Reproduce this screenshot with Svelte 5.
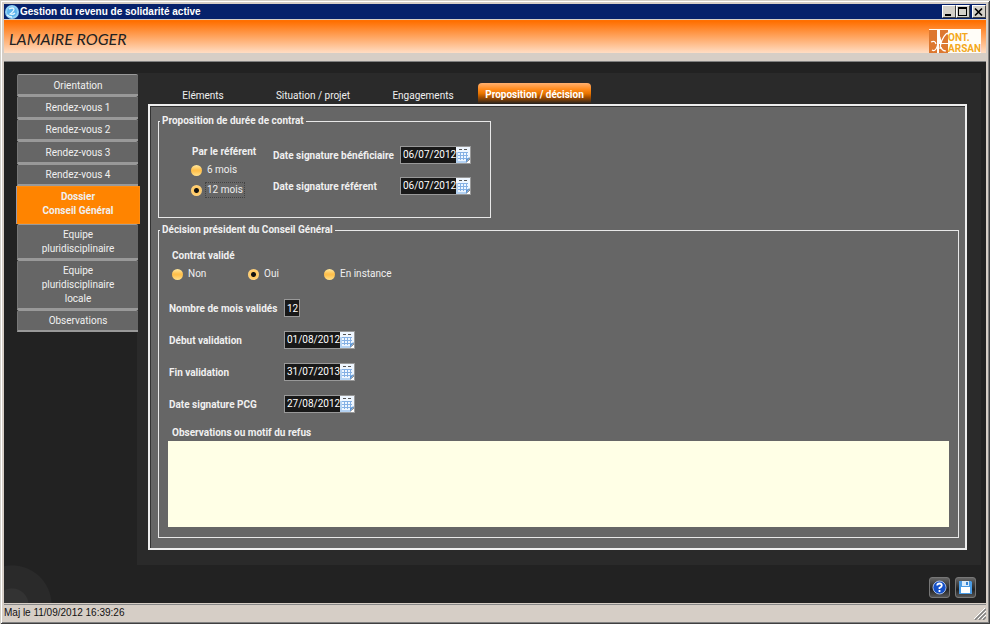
<script>
  let patient = 'LAMAIRE ROGER';
  let lastUpdate = 'Maj le 11/09/2012 16:39:26';

  const meetings = ['Orientation', 'Rendez-vous 1', 'Rendez-vous 2', 'Rendez-vous 3', 'Rendez-vous 4'];
  const sections = [
    { lines: ['Dossier', 'Conseil Général'] },
    { lines: ['Equipe', 'pluridisciplinaire'] },
    { lines: ['Equipe', 'pluridisciplinaire', 'locale'] },
    { lines: ['Observations'] }
  ];
  const tabs = ['Eléments', 'Situation / projet', 'Engagements', 'Proposition / décision'];

  let activeSection = 'Dossier';
  let activeTab = 'Proposition / décision';

  let duration = '12';
  let decision = 'Oui';
  let months = '12';
  let notes = '';

  let signatures = [
    { id: 'sig-benef', label: 'Date signature bénéficiaire', value: '06/07/2012' },
    { id: 'sig-ref', label: 'Date signature référent', value: '06/07/2012' }
  ];
  let validation = [
    { id: 'val-start', label: 'Début validation', value: '01/08/2012' },
    { id: 'val-end', label: 'Fin validation', value: '31/07/2013' },
    { id: 'sig-pcg', label: 'Date signature PCG', value: '27/08/2012' }
  ];
</script>

<div class="window">
  <div class="titlebar">
    <svg class="app-icon" viewBox="0 0 14 14" aria-hidden="true">
      <circle cx="7" cy="7" r="7" fill="#8fd0f5" />
      <circle cx="7" cy="7" r="5" fill="#5db4ec" />
      <path d="M4 4q4-2 5 0q0 2-4 5q3 1 5-1M2 10q3 2 5 2" stroke="#e4f6ff" stroke-width="1.3" fill="none" />
    </svg>
    <h1>Gestion du revenu de solidarité active</h1>
    <button class="win-btn" aria-label="Réduire">
      <svg viewBox="0 0 12 10"><path d="M2 7h6v2H2z" /></svg>
    </button>
    <button class="win-btn" aria-label="Agrandir">
      <svg viewBox="0 0 12 10"><path d="M1 0h9v9H1zM2 2v6h7V2z" fill-rule="evenodd" /></svg>
    </button>
    <button class="win-btn close" aria-label="Fermer">
      <svg viewBox="0 0 12 10"><path d="M2 1.500L9 8.500M9 1.500L2 8.500" stroke="#000" stroke-width="1.700" /></svg>
    </button>
  </div>

  <header>
    <h2>{patient}</h2>
    <svg class="logo" viewBox="0 0 52 24" role="img" aria-label="Mont Marsan">
      <rect width="52" height="24" fill="#fffdf8" />
      <path d="M0 1h8v23H0zM11 1h8v13h-8zM10 15h9v9h-9z" fill="#dd7830" />
      <path d="M3 21q3 2 5-3t1-12q4 3 2 14q1-10 6-15q3-2 2 1M2 13q4-2 5 2M12 18q1 4 5 4" stroke="#fff" stroke-width="1.200" fill="none" />
      <text x="19" y="12">ONT.</text>
      <text x="19" y="23">ARSAN</text>
    </svg>
  </header>

  <main>
    <nav>
      <div class="meetings">
        {#each meetings as item}
          <button class="nav-item">{item}</button>
        {/each}
      </div>
      {#each sections as section}
        <button class="nav-item" class:active={section.lines[0] === activeSection}>
          {#each section.lines as line}
            <span>{line}</span>
          {/each}
        </button>
      {/each}
    </nav>

    <div class="content">
      <div class="tabs" role="tablist">
        {#each tabs as tab}
          <button
            class="tab"
            role="tab"
            class:active={tab === activeTab}
            aria-selected={tab === activeTab}
            on:click={() => (activeTab = tab)}>{tab}</button>
        {/each}
      </div>

      <div class="panel">
        <fieldset class="proposal">
          <legend>Proposition de durée de contrat</legend>
          <div class="duration" role="radiogroup" aria-labelledby="duration-title">
            <strong id="duration-title">Par le référent</strong>
            <label><input type="radio" bind:group={duration} value="6" /><span>6 mois</span></label>
            <label class="focused"><input type="radio" bind:group={duration} value="12" /><span>12 mois</span></label>
          </div>
          <div class="signatures">
            {#each signatures as field}
              <label for={field.id}>{field.label}</label>
              {@render dateField(field)}
            {/each}
          </div>
        </fieldset>

        <fieldset class="decision">
          <legend>Décision président du Conseil Général</legend>
          <strong class="sub" id="decision-title">Contrat validé</strong>
          <div class="choices" role="radiogroup" aria-labelledby="decision-title">
            {#each ['Non', 'Oui', 'En instance'] as choice}
              <label><input type="radio" bind:group={decision} value={choice} /><span>{choice}</span></label>
            {/each}
          </div>
          <div class="rows">
            <label for="months">Nombre de mois validés</label>
            <input id="months" class="months" type="text" bind:value={months} />
            {#each validation as field}
              <label for={field.id}>{field.label}</label>
              {@render dateField(field)}
            {/each}
          </div>
          <label class="sub" for="notes">Observations ou motif du refus</label>
          <textarea id="notes" bind:value={notes}></textarea>
        </fieldset>
      </div>
    </div>

    <div class="actions">
      <button aria-label="Aide">
        <svg viewBox="0 0 15 15">
          <circle cx="7.500" cy="7.500" r="6.500" fill="#1450c8" stroke="#a4b8e0" />
          <path d="M5.200 5.500Q5.200 3.500 7.500 3.500T9.800 5.500Q9.800 6.800 7.500 7.800V9M7.500 10v2" stroke="#fff" stroke-width="1.800" fill="none" />
        </svg>
      </button>
      <button aria-label="Enregistrer">
        <svg viewBox="0 0 15 15">
          <path d="M1 1h12l1 1v12H1z" fill="#4a9be4" />
          <path d="M4 1h7v5H4z" fill="#d9ebfa" />
          <path d="M8 2h2v3H8z" fill="#3584d4" />
          <path d="M3 7h9v6H3z" fill="#fff" />
        </svg>
      </button>
    </div>
  </main>

  <footer>
    <span>{lastUpdate}</span>
    <svg class="grip" viewBox="0 0 12 12" aria-hidden="true">
      <path d="M1 12L12 1M5 12l7-7M9 12l3-3" stroke="#808080" stroke-width="1.500" />
      <path d="M0 11L11 0M4 11l8-8M8 11l4-4" stroke="#fff" stroke-width="1" />
    </svg>
  </footer>
</div>

{#snippet dateField(field)}
  <div class="date">
    <input id={field.id} type="text" bind:value={field.value} />
    <button aria-label="Calendrier">
      <svg viewBox="0 0 14 16">
        <path d="M0 0h14v11l-4 5H0z" fill="#eef6ff" />
        <path d="M0 5h2v11H0zM0 14h10v2H0z" fill="#b4d2f2" />
        <path d="M3 2.500h3M8 2.500h3" stroke="#555" stroke-width="1" />
        <path d="M2 5.500h10M2 8.500h10M2 11.500h9M4.500 5v8M7.500 5v8M10.500 5v7" stroke="#84b0e4" stroke-width="1" />
        <path d="M14 10l-4 6v-4z" fill="#5a94d4" />
        <path d="M14 12v4h-4z" fill="#fff" />
      </svg>
    </button>
  </div>
{/snippet}

<style>
  :global(body) {
    background: #d4ccc4;
  }

  * {
    box-sizing: border-box;
  }

  .window {
    min-height: 100vh;
    display: flex;
    flex-direction: column;
    padding: 4px;
    background: #d6cec6;
    box-shadow: inset 1px 1px #d4d0c8, inset -1px -1px #404040, inset 2px 2px #fff, inset -2px -2px #808080;
    color: #f0f0f0;
    font: 10px/14px Roboto, "Open Sans", sans-serif;
  }

  button,
  input,
  textarea {
    margin: 0;
    padding: 0;
    border: 0;
    font: inherit;
    color: inherit;
  }

  svg {
    display: block;
  }

  .titlebar {
    display: flex;
    align-items: center;
    height: 15px;
    padding-left: 1px;
    background: #06216b;
  }

  .app-icon {
    width: 14px;
    height: 14px;
  }

  h1 {
    flex: 1;
    margin: 0 0 0 1px;
    color: #fff;
    font: bold 10px/14px "Liberation Sans", Arial, sans-serif;
  }

  .win-btn {
    width: 14px;
    height: 13px;
    background: #d4d0c8;
    border: 1px solid #fff;
    border-right-color: #404040;
    border-bottom-color: #404040;
  }

  .win-btn svg {
    width: 12px;
    height: 10px;
  }

  .close {
    margin-left: 2px;
  }

  header {
    display: flex;
    align-items: center;
    justify-content: space-between;
    height: 33px;
    margin-top: 1px;
    padding: 0 5px;
    background: linear-gradient(#ff7002 5%, #ffddc4);
  }

  h2 {
    margin: 5px 0 0;
    color: #222;
    font: italic 16px/24px Lato, sans-serif;
  }

  .logo {
    align-self: flex-end;
    width: 52px;
    height: 24px;
  }

  .logo text {
    font: bold 10px Roboto, sans-serif;
    fill: #f4a81c;
  }

  main {
    flex: 1;
    display: grid;
    grid-template-columns: 133px 1fr;
    grid-template-rows: 1fr 38px;
    margin-top: 8px;
    padding: 11px 5px 0 0;
    border-top: 1px solid #808080;
    background: radial-gradient(circle at 8px calc(100% + 2px), #333 16px, transparent 17px),
      radial-gradient(circle at 8px calc(100% + 2px), #2a2a2a 39px, transparent 40px), #222;
  }

  nav {
    display: flex;
    flex-direction: column;
    padding: 1px 0 0 13px;
    margin-right: -1px;
    z-index: 1;
  }

  .meetings {
    display: grid;
    grid-auto-rows: 1fr;
    height: 112px;
  }

  .nav-item {
    padding: 3px 0 2px;
    border-top: 1px solid #999;
    border-bottom: 2px solid #999;
    border-left: 1px solid #777;
    border-radius: 2px 2px 0 0;
    background: #666;
    text-align: center;
  }

  .meetings .nav-item {
    padding: 2px 0 0;
  }

  .nav-item span {
    display: block;
  }

  .nav-item.active {
    margin: 0 -2px 0 -1px;
    padding: 3px 0 5px;
    border: 1px solid #ff8c10;
    border-left-color: #99a;
    border-radius: 0;
    background: #ff8400;
    font-weight: bold;
  }

  .content {
    display: flex;
    flex-direction: column;
    padding: 10px 14px 15px 11px;
    background: #2a2a2a;
  }

  .tabs {
    display: flex;
    height: 21px;
  }

  .tab {
    width: 110px;
    padding-top: 5px;
    background: none;
  }

  .tab.active {
    width: 113px;
    padding: 2px 0 0;
    border-radius: 4px 4px 0 0;
    background: linear-gradient(#ffb070, #ff8a1c 30%, #e87400 50%, #a04c00 70%, #222);
    color: #fff;
    font-weight: bold;
  }

  .panel {
    flex: 1;
    display: flex;
    flex-direction: column;
    gap: 5px;
    padding: 8px 6px 10px 8px;
    border: 2px solid #eee;
    background: #666;
    box-shadow: inset 1px 1px #333;
  }

  fieldset {
    min-width: 0;
    margin: 0;
    padding: 0;
    border: 1px solid #e8e8e8;
    box-shadow: none;
  }

  legend {
    margin-left: 1px;
    padding: 0 2px;
    font-weight: bold;
  }

  label,
  strong {
    white-space: nowrap;
  }

  input[type='radio'] {
    appearance: none;
    width: 11px;
    height: 11px;
    border-radius: 50%;
    background: linear-gradient(#ffe9a0, #ffc04c 45%, #ffc04c 55%, #ffe08c);
  }

  input[type='radio']:checked {
    background: radial-gradient(circle, #111 2px, #ffc860 3px, #ffdc9c);
  }

  .duration label,
  .choices label {
    display: flex;
    align-items: center;
    gap: 4px;
  }

  .duration span,
  .choices span {
    padding: 0 1px;
  }

  .focused span {
    outline: 1px dotted #444;
  }

  .proposal {
    align-self: flex-start;
    width: 333px;
    height: 104px;
  }

  .duration {
    float: left;
    width: 114px;
    padding: 17px 0 0 33px;
  }

  .duration strong {
    display: block;
    margin-bottom: 1px;
  }

  .duration label {
    height: 20px;
    margin-left: -1px;
  }

  .signatures {
    display: grid;
    grid-template-columns: 127px 71px;
    row-gap: 13px;
    align-items: center;
    padding-top: 18px;
  }

  .signatures label,
  .rows label,
  .sub {
    font-weight: bold;
  }

  .signatures label,
  .rows label {
    padding-top: 2px;
  }

  .date {
    display: flex;
    width: 71px;
    height: 18px;
    border: 1px solid #999;
    background: #181818;
  }

  .date input {
    flex: 1;
    min-width: 0;
    padding-left: 2px;
    background: none;
    color: #fff;
  }

  .date button {
    width: 14px;
    background: none;
  }

  .date svg {
    width: 14px;
    height: 16px;
  }

  .decision {
    flex: 1;
    display: flex;
    flex-direction: column;
    padding: 12px 9px 10px;
  }

  .decision legend {
    margin-left: -8px;
  }

  .sub {
    display: block;
    padding-left: 4px;
  }

  .choices {
    display: flex;
    padding: 4px 0 0 4px;
  }

  .choices label {
    width: 76px;
  }

  .rows {
    display: grid;
    grid-template-columns: 115px 1fr;
    row-gap: 14px;
    align-items: center;
    padding: 18px 0 13px 1px;
  }

  .months {
    width: 16px;
    height: 18px;
    padding-left: 2px;
    border: 1px solid #999;
    background: #181818;
    color: #fff;
  }

  textarea {
    flex: 1;
    min-height: 86px;
    margin-top: 1px;
    background: #ffffe6;
    color: #222;
    resize: none;
  }

  .actions {
    grid-column: 1 / -1;
    display: flex;
    justify-content: flex-end;
    gap: 5px;
    padding: 12px 5px 0 0;
  }

  .actions button {
    display: grid;
    place-items: center;
    width: 21px;
    height: 21px;
    border: 1px solid #777;
    border-radius: 3px;
    background: linear-gradient(#666, #222 60%, #555);
  }

  .actions svg {
    width: 15px;
    height: 15px;
  }

  footer {
    display: flex;
    justify-content: space-between;
    align-items: flex-end;
    height: 16px;
    margin-top: 1px;
    border-top: 1px solid #888;
    color: #111;
    font: 10px/15px "Liberation Sans", Arial, sans-serif;
  }

  .grip {
    width: 12px;
    height: 12px;
  }
</style>
